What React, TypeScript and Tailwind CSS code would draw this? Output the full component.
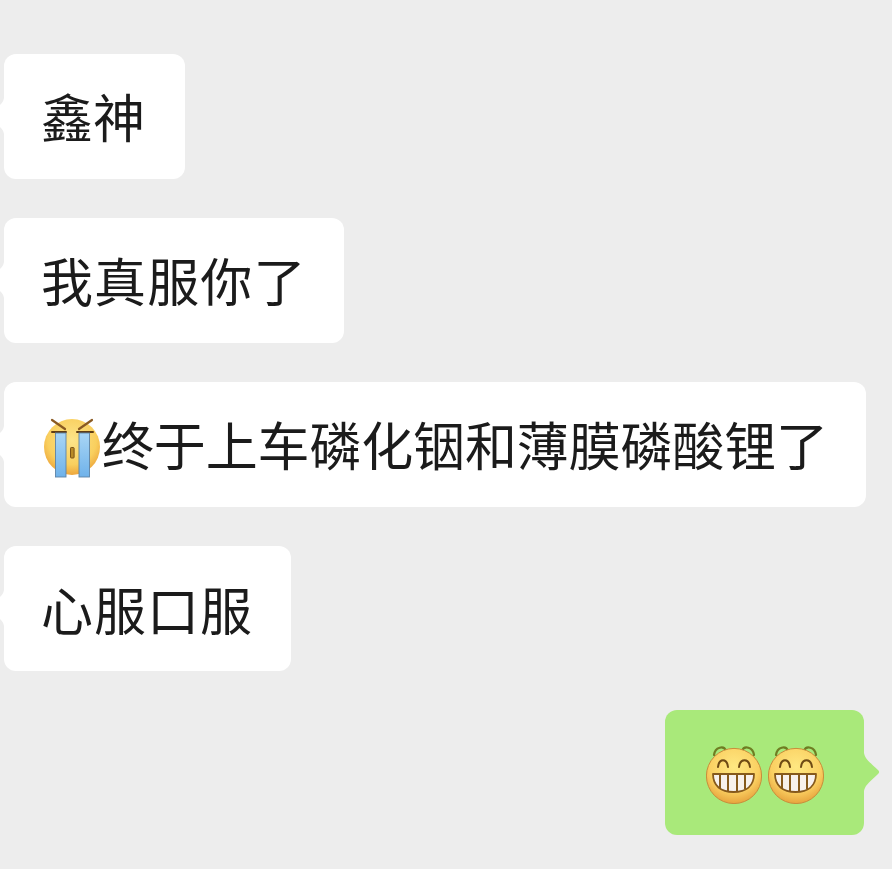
function CryEmoji() {
  return (
    <svg width="60" height="62" viewBox="0 0 60 62" className="mt-[7px] shrink-0">
      <defs>
        <radialGradient id="cryFace" cx="50%" cy="38%" r="62%">
          <stop offset="0%" stopColor="#fde58a" />
          <stop offset="70%" stopColor="#f9cf5e" />
          <stop offset="100%" stopColor="#eda63c" />
        </radialGradient>
        <linearGradient id="tear" x1="0" y1="0" x2="0" y2="1">
          <stop offset="0%" stopColor="#a9d6f5" />
          <stop offset="100%" stopColor="#6fb2ea" />
        </linearGradient>
      </defs>
      <circle cx="29" cy="30" r="28" fill="url(#cryFace)" />
      <path d="M9 3 L22 12 M49 3 L36 12" stroke="#8a5a22" strokeWidth="2.2" strokeLinecap="round" />
      <path d="M9 15 H23 M34 15 H50" stroke="#5f3d14" strokeWidth="2" strokeLinecap="round" />
      <rect x="12.5" y="16" width="10.5" height="44" fill="url(#tear)" stroke="#5d83a6" strokeWidth="0.9" />
      <rect x="36" y="16" width="10.5" height="44" fill="url(#tear)" stroke="#5d83a6" strokeWidth="0.9" />
      <rect x="27.5" y="30.5" width="3.6" height="10.5" rx="0.8" fill="#b98a26" stroke="#7a5218" strokeWidth="1" />
    </svg>
  );
}

function GrinEmoji({ id }: { id: string }) {
  return (
    <svg width="56" height="58" viewBox="0 0 56 58" className="mt-[4px] shrink-0">
      <defs>
        <radialGradient id={id} cx="50%" cy="34%" r="68%">
          <stop offset="0%" stopColor="#ffe882" />
          <stop offset="65%" stopColor="#fad062" />
          <stop offset="100%" stopColor="#e5a03a" />
        </radialGradient>
      </defs>
      <path d="M8 9 C9 1 18 -1 20 5 M36 5 C38 -1 47 1 48 9" fill="none" stroke="#6f7d22" strokeWidth="2.2" strokeLinecap="round" />
      <circle cx="28" cy="30" r="27.6" fill={`url(#${id})`} stroke="#c98c3a" strokeWidth="1" />
      <path d="M12 21 C13 12 21 12 22 21 M33 21 C34 12 43 12 44 21" fill="none" stroke="#6e4a14" strokeWidth="2" strokeLinecap="round" />
      <path d="M7 28 H48 C48 40 40 46 27.5 46 C15 46 7 40 7 28 Z" fill="#f7f1ec" stroke="#85591c" strokeWidth="1.8" strokeLinejoin="round" />
      <path d="M14 28 V42 M22 28 V45.5 M31 28 V45.5 M39 28 V43" stroke="#85591c" strokeWidth="2" />
    </svg>
  );
}

function LeftTail() {
  return (
    <svg width="4" height="38" viewBox="0 0 4 38" className="absolute left-[-4px] top-[43px]">
      <path d="M4 0 C4 3 3 5 0 8 V30 C3 33 4 35 4 38 Z" fill="#ffffff" />
    </svg>
  );
}

function RightTail() {
  return (
    <svg width="16" height="38" viewBox="0 0 16 38" className="absolute right-[-16px] top-[43px]">
      <path d="M0 0 C1 5 3 7 14 17 C15.5 18.5 15.5 19.5 14 21 C3 31 1 33 0 38 Z" fill="#a9e97a" />
    </svg>
  );
}

function Incoming({ children, width }: { children: React.ReactNode; width: string }) {
  return (
    <div className={`relative flex h-[125px] items-center rounded-xl bg-white pl-[39px] ${width}`}>
      <LeftTail />
      {children}
    </div>
  );
}

export default function App() {
  return (
    <div
      className="flex min-h-[869px] w-[892px] flex-col gap-[39px] overflow-hidden bg-[#ededed] pt-[54px] pl-1 text-[52px] leading-none text-[#1b1b1b]"
      style={{ fontFamily: '"Noto Sans CJK SC", sans-serif' }}
    >
      <Incoming width="w-[181px]">
        <span className="-ml-[2px] mb-[1px] whitespace-nowrap">鑫神</span>
      </Incoming>
      <Incoming width="w-[340px]">
        <span className="-ml-[2px] mb-[1px] tracking-[1.1px] whitespace-nowrap">我真服你了</span>
      </Incoming>
      <Incoming width="w-[862px]">
        <CryEmoji />
        <span className="-ml-[1px] mb-[1px] tracking-[-0.15px] whitespace-nowrap">终于上车磷化铟和薄膜磷酸锂了</span>
      </Incoming>
      <Incoming width="w-[287px]">
        <span className="-ml-[2px] tracking-[1px] whitespace-nowrap">心服口服</span>
      </Incoming>
      <div className="relative ml-[661px] flex h-[125px] w-[199px] items-center gap-[6px] rounded-xl bg-[#a9e97a] pl-[41px]">
        <GrinEmoji id="grinA" />
        <GrinEmoji id="grinB" />
        <RightTail />
      </div>
    </div>
  );
}
